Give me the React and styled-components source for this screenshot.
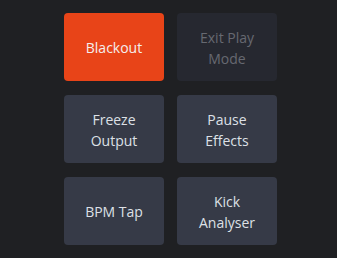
import React from 'react'
import styled, { createGlobalStyle } from 'styled-components'

const Global = createGlobalStyle`
  html, body {
    margin: 0;
    padding: 0;
    background: #1f2023;
  }
`

const buttons = [
  { label: 'Blackout', kind: 'active' },
  { label: 'Exit Play Mode', kind: 'disabled' },
  { label: 'Freeze Output' },
  { label: 'Pause Effects' },
  { label: 'BPM Tap' },
  { label: 'Kick Analyser' },
]

const App = () => {
  return (
    <>
      <Global />
      <Page>
        <Grid>
          {buttons.map((b) => (
            <Pad key={b.label} $kind={b.kind}>{b.label}</Pad>
          ))}
        </Grid>
      </Page>
    </>
  )
}

const Page = styled.div`
  width: 337px;
  height: 258px;
  background: #1f2023;
  padding: 13px 0 0 64px;
  box-sizing: border-box;
`

const Grid = styled.div`
  display: grid;
  grid-template-columns: repeat(2, 100px);
  grid-auto-rows: 68px;
  column-gap: 13px;
  row-gap: 14px;
`

const Pad = styled.div`
  display: flex;
  align-items: center;
  justify-content: center;
  text-align: center;
  padding: 1px 12px 0;
  border-radius: 4px;
  font-family: "Open Sans", "Noto Sans", sans-serif;
  font-size: 14px;
  line-height: 21px;
  background: ${(p) => p.$kind === 'active' ? '#e84418' : p.$kind === 'disabled' ? '#262830' : '#363a47'};
  color: ${(p) => p.$kind === 'disabled' ? '#666971' : p.$kind === 'active' ? '#f4efee' : '#dde0e6'};
`

export default App
